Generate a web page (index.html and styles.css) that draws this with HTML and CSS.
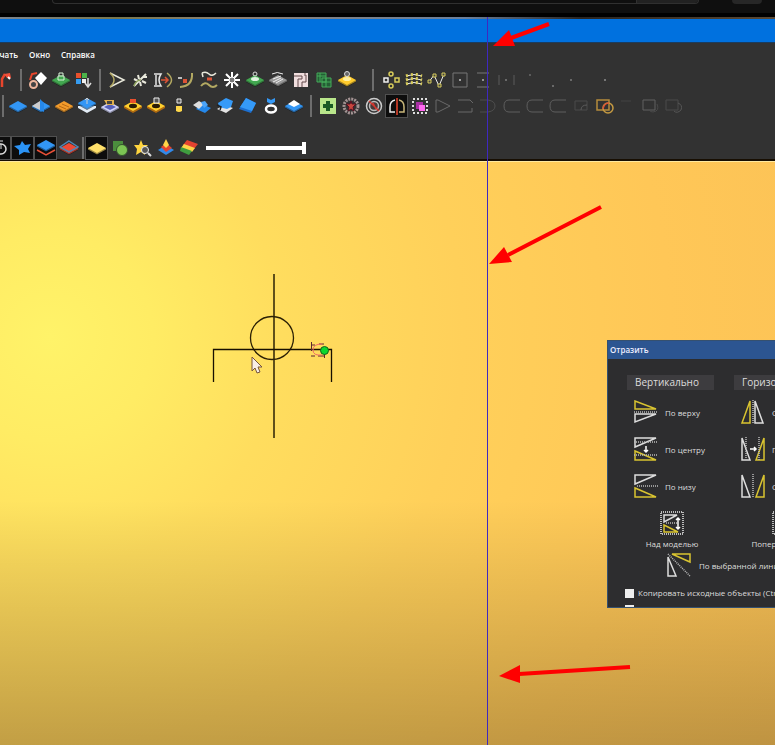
FILE: index.html
```html
<!DOCTYPE html>
<html lang="ru">

<head>
    <meta charset="utf-8">
    <title>Отразить</title>
    <meta name="viewport" content="initial-scale=1.0, width=device-width">
    <link rel="stylesheet" href="styles.css">
</head>

<body>
    <!-- shared shapes -->
    <svg class="defs">
        <symbol id="tile" viewBox="0 0 20 20">
            <path d="M1 10v2l9 5 9-5v-2z" fill="#0008" />
            <path d="M1 10v1.5l9 5 9-5V10z" fill="currentColor" opacity=".6" />
            <path d="M10 5l9 5-9 5-9-5z" fill="currentColor" />
        </symbol>
        <symbol id="ring" viewBox="0 0 20 20">
            <path d="M1 10v2l9 5 9-5v-2z" fill="#b06a10" />
            <path d="M10 5l9 5-9 5-9-5z" fill="#ffd02e" />
            <ellipse cx="10" cy="10" rx="4" ry="2.2" fill="#2a1c05" />
        </symbol>
        <symbol id="cee" viewBox="0 0 20 20">
            <path d="M18 4H7Q2 4 2 10t5 6h11" fill="none" stroke="currentColor" />
        </symbol>
    </svg>

    <div class="browser">
        <div class="search"><span class="search-button"></span></div>
        <div class="avatar"></div>
    </div>
    <div class="photo-strip"></div>
    <div class="titlebar"></div>

    <nav class="menu">
        <a href="#">Печать</a>
        <a href="#">Окно</a>
        <a href="#">Справка</a>
    </nav>

    <div class="toolbars">
        <div class="toolbar first">
            <button aria-label="Лампа"><svg viewBox="0 0 20 20"><path d="M7 17V9l3-5" stroke="#e8452c" stroke-width="2.5" fill="none"/><path d="M9 4l6-1 1 5-4 0z" fill="#f0503a"/><path d="M13 7l2 2" stroke="#fff" stroke-width="2"/></svg></button>
            <span class="sep"></span>
            <button aria-label="Заливка"><svg viewBox="0 0 20 20"><path d="M13 2l6 6-6 7-6-7z" fill="#fff"/><path d="M2 10l2-6 5-1" stroke="#e8452c" stroke-width="2" fill="none"/><circle cx="5.500" cy="14.500" r="3.500" fill="#444" stroke="#eeb59c" stroke-width="2"/></svg></button>
            <button aria-label="Замок слоя" class="green"><svg viewBox="0 0 20 20"><use href="#tile"/><path d="M7 10V6h6v4zM8 6V3h4v3" fill="none" stroke="#d8f5d8"/></svg></button>
            <button aria-label="Цвета"><svg viewBox="0 0 20 20"><path d="M2 3h5v5H2z" fill="#e8502c"/><path d="M8 3h5v5H8z" fill="#4db34a"/><path d="M2 9h5v5H2z" fill="#369cf0"/><path d="M8 9h4v4H8z" fill="#eee"/><path d="M14 8v8m-3-3l3 4 3-4" fill="none" stroke="#ddd" stroke-width="1.500"/></svg></button>
            <span class="sep"></span>
            <button aria-label="Угол"><svg viewBox="0 0 20 20"><path d="M3 3l14 7L3 17" fill="none" stroke="#e9e9dc" stroke-width="1.500"/><path d="M3 3q8 7 0 14" fill="none" stroke="#b3a962" stroke-width="1.500"/></svg></button>
            <button aria-label="Обрезать"><svg viewBox="0 0 20 20"><path d="M4 16L16 4M4 9l4 2M8 5l1 4M12 11l4 2M10 12l1 4M13 7h4" fill="none" stroke="#e9e9dc" stroke-width="2"/><path d="M4 16q2-6 7-6" fill="none" stroke="#8aa05a" stroke-width="1.500"/></svg></button>
            <button aria-label="Соединить"><svg viewBox="0 0 20 20"><path d="M1 4h7q-4 6 0 12H1M3 5v10" fill="none" stroke="#e5e5e5" stroke-width="1.500"/><path d="M14 3q9 7 0 14" fill="none" stroke="#b3a962" stroke-width="1.500"/><path d="M8 10h7M12 7l3 3-3 3" fill="none" stroke="#dc5436" stroke-width="1.500"/></svg></button>
            <button aria-label="Скругление"><svg viewBox="0 0 20 20"><path d="M16 3q1 13-12 14" fill="none" stroke="#b3a962" stroke-width="2"/><path d="M2 8h4" stroke="#eee" stroke-width="1.500"/><path d="M7 9h4v4H7z" fill="#dc5436"/></svg></button>
            <button aria-label="Смещение"><svg viewBox="0 0 20 20"><path d="M3 3q4-2 7 1t7-1M4 7l-1-4" fill="none" stroke="#e9e9dc" stroke-width="1.500"/><path d="M2 16q4-5 8-1t8 0" fill="none" stroke="#b3a962" stroke-width="2"/><path d="M8 9h5" stroke="#dc5436" stroke-width="3"/></svg></button>
            <button aria-label="Звезда"><svg viewBox="0 0 20 20"><path d="M10 2v16M2 10h16M4 4l12 12M16 4L4 16" stroke="#fff" stroke-width="2"/><circle cx="10" cy="10" r="3" fill="#777" stroke="#fff"/></svg></button>
            <button aria-label="Проекция" class="green"><svg viewBox="0 0 20 20"><use href="#tile"/><ellipse cx="10" cy="9" rx="4" ry="2" fill="#dff3df"/><circle cx="10" cy="4" r="2" fill="none" stroke="#ddd"/></svg></button>
            <button aria-label="Наложение" class="grey"><svg viewBox="0 0 20 20"><use href="#tile"/><path d="M4 4q5-3 11 0M5 9l8-3M5 12l8-4M8 13l7-4" fill="none" stroke="#eee"/></svg></button>
            <button aria-label="Лабиринт"><svg viewBox="0 0 20 20"><path d="M3 3h14v14H3z" fill="#f0dede"/><path d="M3 6h8v3H7v8M11 17v-5h4V5M14 3v3" fill="none" stroke="#63494b"/></svg></button>
            <button aria-label="Раскладка"><svg viewBox="0 0 20 20"><path d="M3 3h9v9H3zM8 8h9v9H8z" fill="#245f35" stroke="#45ab5b"/><path d="M3 6h9M6 3v9M12 8v9M8 12h9" stroke="#45ab5b"/></svg></button>
            <button aria-label="Рельеф" class="gold"><svg viewBox="0 0 20 20"><use href="#tile"/><ellipse cx="10" cy="9" rx="4" ry="2" fill="#fff0a0"/><circle cx="10" cy="4" r="2.500" fill="#666" stroke="#ddd"/></svg></button>
            <span class="sep wide"></span>
            <button aria-label="Круговой массив"><svg viewBox="0 0 20 20"><g fill="none" stroke="#d8cc5a" stroke-width="1.500"><circle cx="10" cy="4" r="2"/><circle cx="10" cy="16" r="2"/><path d="M14 8h4v4h-4z"/><path d="M3 8h4v4H3z" stroke="#eee"/></g></svg></button>
            <button aria-label="Сетка узлов"><svg viewBox="0 0 20 20"><path d="M2 6q8-3 16 0M2 10q8-3 16 0M2 14q8-3 16 0" fill="none" stroke="#eee"/><path d="M2 6q8-3 16 0M2 10q8-3 16 0M2 14q8-3 16 0" fill="none" stroke="#d8cc5a" stroke-width="3" stroke-dasharray="2 3"/></svg></button>
            <button aria-label="Узлы"><svg viewBox="0 0 20 20"><path d="M2 12l5-7 5 11 5-12" fill="none" stroke="#eee"/><path d="M1 10h3v3H1zM6 4h3v3H6zM11 14h3v3h-3zM15 3h3v3h-3z" fill="#444" stroke="#d8cc5a"/></svg></button>
            <button aria-label="По центру листа" class="off"><svg viewBox="0 0 20 20"><path d="M3 3h14v14H3z" fill="none" stroke="#888"/><path d="M9 9h2v2H9z" fill="#bbb"/></svg></button>
            <button aria-label="По вертикали" class="off"><svg viewBox="0 0 20 20"><path d="M4 3h12M4 17h12" stroke="#888"/><path d="M9 9h2v2H9z" fill="#aaa"/></svg></button>
            <button aria-label="По горизонтали" class="off"><svg viewBox="0 0 20 20"><path d="M3 5v10M18 5v10" stroke="#666"/><path d="M9 9h2v2H9z" fill="#777"/></svg></button>
            <button aria-label="Вверх" class="off"><svg viewBox="0 0 20 20"><path d="M10 4h2v2h-2z" fill="#666"/></svg></button>
            <button aria-label="Вниз" class="off"><svg viewBox="0 0 20 20"><path d="M10 15h2v2h-2z" fill="#777"/></svg></button>
            <button aria-label="Влево" class="off"><svg viewBox="0 0 20 20"><path d="M5 9h2v2H5z" fill="#777"/></svg></button>
            <button aria-label="Вправо" class="off"><svg viewBox="0 0 20 20"><path d="M16 9h2v2h-2z" fill="#888"/></svg></button>
        </div>

        <div class="toolbar second">
            <span class="sep narrow"></span>
            <button aria-label="Плоскость" class="blue"><svg viewBox="0 0 20 20"><use href="#tile"/></svg></button>
            <button aria-label="Сглаживание" class="blue"><svg viewBox="0 0 20 20"><use href="#tile"/><path d="M9 5L1 10l8 4z" fill="#ccc"/><path d="M9 3l4 4v9l-4-2z" fill="#2588ea"/></svg></button>
            <button aria-label="Текстура" class="orange"><svg viewBox="0 0 20 20"><use href="#tile"/><path d="M5 10l7 3M8 8l7 3" stroke="#b96a14"/></svg></button>
            <button aria-label="Слои" class="blue"><svg viewBox="0 0 20 20"><path d="M1 12l9 5 9-5v-2H1z" fill="#e3ecf5"/><use href="#tile" y="-3"/><path d="M10 8V2M8 4l2-2 2 2" stroke="#ccc" fill="none"/></svg></button>
            <button aria-label="Вставить рельеф" class="lilac"><svg viewBox="0 0 20 20"><use href="#tile" y="1"/><path d="M4 11l6 3 6-3-6-3z" fill="#5560ba"/><path d="M4 4h10v5H7z" fill="#e2b14b"/><path d="M7 5h5v3H7z" fill="#444"/></svg></button>
            <button aria-label="Добавить"><svg viewBox="0 0 20 20"><use href="#ring"/><path d="M7 3h6v4H7z" fill="#e9502e"/></svg></button>
            <button aria-label="Вычесть"><svg viewBox="0 0 20 20"><use href="#ring"/><path d="M8 2h5v5H8z" fill="#555" stroke="#eee"/></svg></button>
            <button aria-label="Объединить"><svg viewBox="0 0 20 20"><path d="M7 10h6v5q-3 2-6 0z" fill="#ffd84a"/><path d="M8 3h4v4H8z" fill="#555" stroke="#eee"/></svg></button>
            <button aria-label="Копия слоя" class="blue"><svg viewBox="0 0 20 20"><path d="M10 8l9 4-6 5-9-4z" fill="#2588ea"/><path d="M1 9l6-4 5 3-5 5z" fill="#ddd"/><path d="M9 6l4-1 3 4-4 3z" fill="#4aa4fa"/></svg></button>
            <button aria-label="Перенос слоя"><svg viewBox="0 0 20 20"><path d="M2 13l7-4 9 3-7 5z" fill="#e4e4e4"/><path d="M3 7l8-5 7 3-2 6-4 2-8-2z" fill="#359af8"/><path d="M2 9l4 2-1 3" stroke="#222" fill="none" stroke-width="1.500"/></svg></button>
            <button aria-label="Наклон"><svg viewBox="0 0 20 20"><path d="M8 2l10 5-5 10-12-4z" fill="#1c6fd0"/><path d="M8 2l10 5-4 8-12-4z" fill="#359af8"/></svg></button>
            <button aria-label="Вращение"><svg viewBox="0 0 20 20"><path d="M6 2l4 2 4-2v4l-4 2-4-2z" fill="#359af8"/><ellipse cx="10" cy="13" rx="5" ry="3.500" fill="#333" stroke="#fff" stroke-width="2.500"/></svg></button>
            <button aria-label="Выдавить" class="blue"><svg viewBox="0 0 20 20"><use href="#tile"/><path d="M10 4l6 4-6 3-6-3z" fill="#fff"/></svg></button>
            <span class="sep medium"></span>
            <button aria-label="Новый"><svg viewBox="0 0 20 20"><path d="M2 2h16v16H2z" fill="#b9e68b"/><path d="M10 5v10M5 10h10" stroke="#1b5b25" stroke-width="4"/></svg></button>
            <button aria-label="Массив по кругу"><svg viewBox="0 0 20 20"><circle cx="10" cy="10" r="7" fill="none" stroke="#a39393" stroke-width="3" stroke-dasharray="2 1"/><path d="M10 5l1 3 4 0-3 3 1 4-3-2-3 2 1-4-3-3h4z" fill="#c8463e" stroke="#512"/></svg></button>
            <button aria-label="Спираль"><svg viewBox="0 0 20 20"><circle cx="10" cy="10" r="7.500" fill="none" stroke="#ccc" stroke-width="1.500"/><circle cx="10" cy="10" r="4.500" fill="#453b3b" stroke="#bbb" stroke-width="1.500"/><path d="M5 5l10 10M9 7l3 6" stroke="#d0362e" stroke-width="1.500"/></svg></button>
            <button aria-label="Отразить" class="active"><svg viewBox="0 0 20 20"><path d="M8 4q-5 1-5 7v5h5" fill="none" stroke="#eee" stroke-width="1.500"/><path d="M12 4q5 1 5 7v5h-5" fill="none" stroke="#c9b77a" stroke-width="1.500"/><path d="M10 2v17" stroke="#e8452c" stroke-width="1.500"/></svg></button>
            <button aria-label="Группа"><svg viewBox="0 0 20 20"><path d="M3 3h14v14H3z" fill="none" stroke="#ddd" stroke-width="2" stroke-dasharray="2 2"/><path d="M6 6h7v7H6z" fill="#a92fa4"/><path d="M9 9h6v6H9z" fill="#ff69f0"/></svg></button>
            <button aria-label="Треугольник" class="off"><svg viewBox="0 0 20 20"><path d="M3 4h2l12 6-12 6H3z" fill="none" stroke="#777"/></svg></button>
            <button aria-label="Открытый контур" class="off"><svg viewBox="0 0 20 20"><path d="M2 4h12l3 3M2 16h14v-4" fill="none" stroke="#777"/></svg></button>
            <button aria-label="Дуга" class="off"><svg viewBox="0 0 20 20"><path d="M1 4h8q7 1 7 6t-7 6H1" fill="none" stroke="#555"/></svg></button>
            <button aria-label="Контур 1" class="off"><svg viewBox="0 0 20 20"><use href="#cee"/></svg></button>
            <button aria-label="Контур 2" class="off"><svg viewBox="0 0 20 20"><use href="#cee"/></svg></button>
            <button aria-label="Контур 3" class="off"><svg viewBox="0 0 20 20"><use href="#cee"/></svg></button>
            <button aria-label="Вырезать" class="off"><svg viewBox="0 0 20 20"><path d="M4 5h12v9H4z" fill="none" stroke="#505050"/><path d="M10 14q0-5 6-5" fill="none" stroke="#666"/></svg></button>
            <button aria-label="Сварить"><svg viewBox="0 0 20 20"><path d="M3 4h12v10H3z" fill="none" stroke="#b58c3c" stroke-width="1.500"/><circle cx="14" cy="12" r="5" fill="none" stroke="#c59a42" stroke-width="1.500"/><path d="M9 13q1-6 6-6" fill="none" stroke="#dc5436" stroke-width="1.500"/></svg></button>
            <button aria-label="Разделить" class="off"><svg viewBox="0 0 20 20"><path d="M4 5h10" stroke="#484848" fill="none"/></svg></button>
            <button aria-label="Пересечь" class="off"><svg viewBox="0 0 20 20"><path d="M3 4h12v10H3z" fill="none" stroke="#6d6d6d"/><path d="M17 8q3 7-4 8-3 0-4-2" fill="none" stroke="#505050"/></svg></button>
            <button aria-label="Исключить" class="off"><svg viewBox="0 0 20 20"><path d="M3 4h12v10H3z" fill="none" stroke="#505050"/><path d="M15 7q5 2 3 7-4 4-7 1" fill="none" stroke="#606060"/></svg></button>
        </div>

        <div class="toolbar third">
            <button aria-label="Таймер" class="active"><svg viewBox="0 0 20 20"><circle cx="11" cy="11" r="5" fill="none" stroke="#ddd" stroke-width="1.500"/><path d="M11 11V6M9 3h4" stroke="#ddd"/></svg></button>
            <button aria-label="Вектор" class="active"><svg viewBox="0 0 20 20"><path d="M9 3l3 4 6-1-3 5 2 4-6-1-5 3V12L1 8l6-1z" fill="#2b93f5"/></svg></button>
            <button aria-label="Рельеф слой" class="active blue"><svg viewBox="0 0 20 20"><path d="M1 12l9 5 9-5" fill="none" stroke="#e85038" stroke-width="1.500"/><use href="#tile" y="-3"/></svg></button>
            <button aria-label="Красный слой" class="red"><svg viewBox="0 0 20 20"><use href="#tile"/><path d="M10 3l9 6-9 5-9-5z" fill="none" stroke="#4d86b5" stroke-width="1.500"/></svg></button>
            <span class="sep small"></span>
            <button aria-label="Светлый слой" class="active pale"><svg viewBox="0 0 20 20"><use href="#tile"/></svg></button>
            <button aria-label="Формы"><svg viewBox="0 0 20 20"><path d="M3 3h10v10H3z" fill="#4b8d3d"/><circle cx="12" cy="12" r="5.500" fill="#7cc453" stroke="#33522d"/></svg></button>
            <button aria-label="Просмотр"><svg viewBox="0 0 20 20"><path d="M8 2l2 5h5l-4 4 1 6-4-3-5 3 1-6-3-4h5z" fill="#ffd53e"/><path d="M15 15l3 3" stroke="#ddd" stroke-width="2"/><circle cx="12" cy="12" r="3.500" fill="#555" stroke="#eee"/></svg></button>
            <button aria-label="Пирамида"><svg viewBox="0 0 20 20"><path d="M2 12l8-5 8 5-8 5z" fill="#3289e8"/><path d="M5 9l5-4 6 5-6 4z" fill="#e34330"/><path d="M10 1l3 6-3 3-3-3z" fill="#ffd447"/></svg></button>
            <button aria-label="Палитра"><svg viewBox="0 0 20 20"><path d="M8 2l11 4-4 5-11-4z" fill="#e34330"/><path d="M5 6l11 4-3 4-11-4z" fill="#ffd447"/><path d="M2 9l11 4-3 4-9-4z" fill="#3f9d3f"/></svg></button>
            <input type="range" class="contrast" aria-label="Контраст" min="0" max="100" value="100">
        </div>
    </div>

    <main class="stage">
        <svg class="drawing" width="130" height="170" viewBox="0 0 130 170">
            <g fill="none" stroke="#2b2005">
                <path d="M64 2v164" stroke-width="1.500" />
                <circle cx="62" cy="66" r="21.500" stroke-width="1.300" />
                <path d="M3.500 110V77.500h118V110" stroke="#181000" stroke-width="1.300" />
            </g>
            <path d="M101 73h4M109 72h5M101 84h4M108 84h6M101.500 70v9M114.500 82v4" fill="none" stroke="#5c2730" />
            <path d="M112 72q-9 0-9 6t9 5" fill="none" stroke="#f06868" />
            <circle cx="114.500" cy="78.500" r="4" fill="#0bd82e" stroke="#155f1b" />
            <path d="M42 85v14l3-3 2 5 3-1-2-5h4z" fill="#f9eee5" stroke="#76543c" />
        </svg>

        <section class="dialog">
            <h2>Отразить</h2>
            <div class="columns">
                <div class="column">
                    <h3>Вертикально</h3>
                    <button><svg viewBox="0 0 24 24"><path d="M1 1v8h21z" stroke="#d9c431"/><path d="M1 14v8l21-8z" stroke="#ddd"/><path d="M0 12h24" class="dots"/></svg>По верху</button>
                    <button><svg viewBox="0 0 24 24"><path d="M1 1v9l21-9z" stroke="#ddd"/><path d="M1 14v9h21z" stroke="#d9c431"/><path d="M0 5h24M0 18h24" class="dots"/><path d="M12 9v6m-2-2l2 2 2-2" stroke="#fff"/></svg>По центру</button>
                    <button><svg viewBox="0 0 24 24"><path d="M1 1v9l21-9z" stroke="#ddd"/><path d="M1 14v9h21z" stroke="#d9c431"/><path d="M3 12h21" class="dots"/></svg>По низу</button>
                </div>
                <div class="column">
                    <h3>Горизонтально</h3>
                    <button><svg viewBox="0 0 24 24"><path d="M1 23h8V1z" stroke="#d9c431"/><path d="M14 1v22h8z" stroke="#ddd"/><path d="M12 0v24" class="dots"/></svg>Слева</button>
                    <button><svg viewBox="0 0 24 24"><path d="M1 1v22h8z" stroke="#ddd"/><path d="M15 23h8V1z" stroke="#d9c431"/><path d="M5 0v24M18 0v24" class="dots"/><path d="M9 12h6m-2-2l2 2-2 2" stroke="#fff"/></svg>По центру</button>
                    <button><svg viewBox="0 0 24 24"><path d="M1 1v22h8z" stroke="#ddd"/><path d="M15 23h8V1z" stroke="#d9c431"/><path d="M12 0v24" class="dots"/></svg>Справа</button>
                </div>
            </div>
            <div class="model">
                <button><svg viewBox="0 0 24 24"><path d="M1 1h22v22H1z" class="dots" stroke-width="2"/><path d="M4 4v7l13-7z" stroke="#ddd"/><path d="M4 14v7h14z" stroke="#d9c431"/><path d="M6 12h12" class="dots"/><path d="M18 7v11m-2-9l2-2 2 2m-4 7l2 2 2-2" stroke="#fff"/></svg>Над моделью</button>
                <button><svg viewBox="0 0 24 24"><path d="M1 1h22v22H1z" class="dots" stroke-width="2"/><path d="M4 4v16h7z" stroke="#ddd"/><path d="M20 4v16h-7z" stroke="#d9c431"/></svg>Поперек модели</button>
            </div>
            <button class="by-line"><svg viewBox="0 0 24 24"><path d="M1 4v19h8z" stroke="#ddd"/><path d="M5 1h18v8z" stroke="#d9c431"/><path d="M1 1l22 22" class="dots"/></svg>По выбранной линии</button>
            <label class="check"><input type="checkbox">Копировать исходные объекты (Ctrl)</label>
            <label class="check cut"><input type="checkbox">Обрезать</label>
        </section>
    </main>

    <div class="guide"></div>
    <svg class="arrows" width="775" height="745" viewBox="0 0 775 745">
        <g stroke="#f00" stroke-width="4">
            <path d="M549 24l-38 14" />
            <path d="M601 207l-93 48" />
            <path d="M630 667l-111 7" />
        </g>
        <g fill="#f00">
            <path d="M493 46l16-16 6 16z" />
            <path d="M489 264l15-17 8 15z" />
            <path d="M499 676l21-11v18z" />
        </g>
    </svg>
</body>

</html>
```
FILE: styles.css
```css
* {
    box-sizing: border-box;
}

body {
    margin: 0;
    min-height: 100vh;
    display: flex;
    flex-direction: column;
    position: relative;
    overflow: hidden;
    background: #323232;
    color: #eee;
    font-family: "Open Sans", "Noto Sans", sans-serif;
    font-size: 8px;
}

button {
    margin: 0;
    padding: 0;
    border: 0;
    background: none;
    color: inherit;
    font: inherit;
}

.defs {
    position: absolute;
    width: 0;
    height: 0;
}

/* top of the player page */
.browser {
    display: flex;
    height: 17px;
    padding: 0 13px 0 52px;
    background: #0f0f0f;
    border-bottom: 4px solid #000;
}

.search {
    flex: 1;
    height: 4px;
    border: 1px solid #303030;
    border-top: 0;
    border-radius: 0 0 20px 20px;
    overflow: hidden;
}

.search-button {
    display: block;
    width: 62px;
    height: 4px;
    margin-left: auto;
    background: #222;
    border-left: 1px solid #303030;
}

.avatar {
    width: 30px;
    height: 4px;
    margin-left: 33px;
    background: #272727;
    border-radius: 0 0 14px 14px;
}

.photo-strip {
    height: 2px;
    background: linear-gradient(90deg, #7b8590, #77764e 15%, #8b8176 30%, #6a7f9b 60%, #292522 75%, #5c4a35);
}

.titlebar {
    height: 24px;
    background: #0071df;
    border-bottom: 1px solid #1b3c5e;
}

.menu {
    display: flex;
    gap: 11px;
    height: 24px;
    margin-left: -11px;
    line-height: 24px;
    font-weight: 600;
}

.menu a {
    color: #fff;
    text-decoration: none;
}

.toolbars {
    border-bottom: 2px solid #170e02;
    height: 94px;
}

.toolbar {
    display: flex;
    align-items: center;
    height: 26px;
}

.toolbar button {
    flex: none;
    display: grid;
    place-items: center;
    width: 23px;
    height: 24px;
}

.toolbar svg {
    width: 20px;
    height: 20px;
}

.toolbar .active {
    background: #0d0d0d;
    border: 1px solid #505050;
}

.toolbar .off {
    opacity: .8;
    color: #6a6a6a;
}

.first {
    margin-left: -7px;
}

.third {
    margin: 16px 0 0 -12px;
}

.sep {
    flex: none;
    width: 10px;
    height: 22px;
    background: linear-gradient(#6d6d6d, #6d6d6d) center / 2px 100% no-repeat;
}

.sep.wide {
    width: 21px;
    background-position: 14px 0;
}

.sep.narrow {
    width: 6px;
}

.sep.medium {
    width: 11px;
}

.sep.small {
    width: 5px;
}

.blue { color: #3296f5; }
.green { color: #42a850; }
.grey { color: #999; }
.gold { color: #ffcb2c; }
.orange { color: #f29b2b; }
.lilac { color: #cfd2f5; }
.red { color: #ee4a36; }
.toolbar .pale { color: #ffe06a; }

.contrast {
    appearance: none;
    width: 100px;
    height: 12px;
    margin: 0 0 0 6px;
    background: linear-gradient(#fff, #fff) center / 100% 4px no-repeat;
}

.contrast::-webkit-slider-thumb {
    appearance: none;
    width: 4px;
    height: 12px;
    background: #fff;
}

/* work area */
.stage {
    flex: 1;
    position: relative;
    overflow: hidden;
    border-top: 1px solid #ffe9a0;
    background:
        linear-gradient(transparent 58%, rgba(0, 0, 0, .1) 76%, rgba(0, 0, 0, .24)),
        radial-gradient(ellipse 860px 860px at 50px 175px, #fff369, #ffec64 12%, #ffdd5e 27%, #ffd05a 48%, #ffc757 72%, #fac156);
}

.drawing {
    position: absolute;
    left: 210px;
    top: 110px;
}

.dialog {
    position: absolute;
    left: 607px;
    top: 178px;
    width: 280px;
    background: #2d2d2f;
    border: 1px solid #35506f;
    color: #ddd;
}

.dialog h2 {
    margin: 0;
    padding-left: 2px;
    background: #2c5591;
    color: #eef;
    font-size: 8px;
    font-weight: 600;
    line-height: 18px;
}

.dialog svg {
    width: 24px;
    height: 24px;
    fill: none;
    stroke-width: 1.5;
}

.dots {
    stroke: #bbb;
    stroke-dasharray: 1 1;
}

.columns {
    display: flex;
    gap: 20px;
    padding: 16px 0 0 19px;
}

.column h3 {
    width: 87px;
    margin: 0 0 10px;
    padding-left: 8px;
    background: #3d3c3f;
    font-size: 10px;
    font-weight: 400;
    line-height: 15px;
}

.column button {
    display: flex;
    align-items: center;
    gap: 7px;
    height: 24px;
    margin: 0 0 13px 7px;
}

.model {
    display: flex;
    gap: 30px;
    padding-left: 23px;
}

.model button {
    display: flex;
    flex-direction: column;
    align-items: center;
    width: 82px;
    line-height: 18px;
}

.by-line {
    display: flex;
    align-items: center;
    gap: 8px;
    margin-left: 59px;
}

.check {
    display: flex;
    align-items: center;
    gap: 4px;
    margin-top: 9px;
    padding-left: 17px;
    line-height: 14px;
}

.check input {
    appearance: none;
    width: 9px;
    height: 9px;
    margin: 0;
    background: #eee;
}

/* only the top edge of the last option is left visible */
.check.cut {
    align-items: flex-start;
    height: 2px;
    margin-top: 5px;
    line-height: 9px;
    overflow: hidden;
}

/* marks over the page */
.guide {
    position: absolute;
    left: 487px;
    top: 17px;
    bottom: 0;
    width: 1px;
    background: #3f28c0;
}

.arrows {
    position: absolute;
    left: 0;
    top: 0;
    pointer-events: none;
}
```
